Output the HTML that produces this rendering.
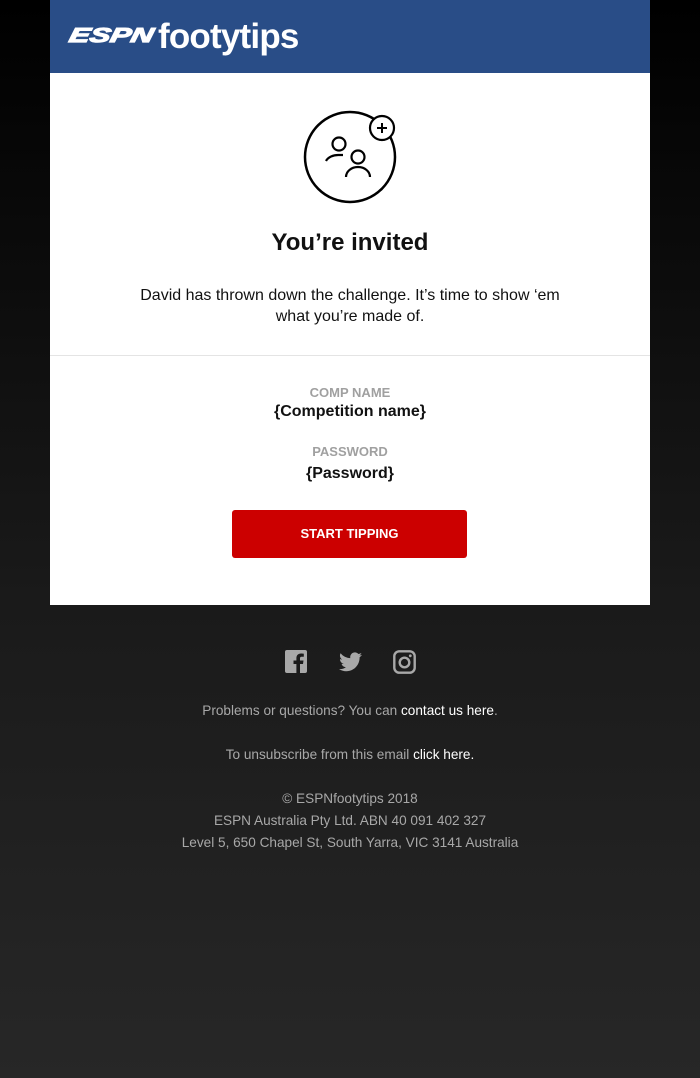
<!DOCTYPE html>
<html><head><meta charset="utf-8"><style>
*{margin:0;padding:0;box-sizing:border-box}
body{width:700px;height:1078px;background:linear-gradient(#000 0px,#1a1a1a 600px,#272727 1078px);font-family:"Liberation Sans",sans-serif;position:relative;overflow:hidden}
.hdr{position:absolute;left:50px;top:0;width:600px;height:73px;background:#294d87}
.espn{position:absolute;left:22px;top:24px;color:#fff;font-style:italic;font-weight:900;font-size:28px;-webkit-text-stroke:1.6px #fff;transform-origin:0 0;transform:skewX(-12deg) scale(1.1,0.72);white-space:nowrap}
.ft2{position:absolute;left:108px;top:17px;color:#fff;font-weight:bold;font-size:35px;letter-spacing:-0.8px;white-space:nowrap}
.card{position:absolute;left:50px;top:73px;width:600px;height:532px;background:#fff;text-align:center}
h1{position:absolute;top:156px;width:100%;font-size:24px;font-weight:bold;color:#111}
.p{position:absolute;top:212px;left:80px;width:440px;font-size:16px;line-height:21px;color:#111}
.hr{position:absolute;top:282px;left:0;width:600px;height:1px;background:#e4e4e4}
.lab{position:absolute;width:100%;font-size:13px;font-weight:bold;color:#a0a0a0}
.val{position:absolute;width:100%;font-size:16px;font-weight:bold;color:#111}
.btn{position:absolute;left:182px;top:437px;width:235px;height:48px;background:#cc0000;border-radius:3px;color:#fff;font-weight:bold;font-size:13px;line-height:48px}
.ft{position:absolute;width:100%;text-align:center;font-size:13.6px;color:#a8a8a8;line-height:22px}
.ft b{font-weight:normal;color:#fff}
</style></head><body>
<div class="hdr"><div class="espn">ESPN</div><div class="ft2">footytips</div></div>
<div class="card">
<svg style="position:absolute;left:240px;top:27px" width="120" height="110" viewBox="240 27 120 110">
<circle cx="300" cy="84" r="45" fill="none" stroke="#000" stroke-width="2.5"/>
<circle cx="332" cy="55" r="12" fill="#fff" stroke="#000" stroke-width="2.2"/>
<path d="M332 50v10M327 55h10" stroke="#000" stroke-width="2"/>
<circle cx="289" cy="71" r="6.5" fill="none" stroke="#000" stroke-width="2.2"/>
<path d="M276 88a13 9 0 0 1 13-6h4" fill="none" stroke="#000" stroke-width="2.2"/>
<circle cx="308" cy="84" r="6.5" fill="none" stroke="#000" stroke-width="2.2"/>
<path d="M296 104a12 10 0 0 1 24 0" fill="none" stroke="#000" stroke-width="2.2"/>
</svg>
<h1>You’re invited</h1>
<div class="p">David has thrown down the challenge. It’s time to show ‘em what you’re made of.</div>
<div class="hr"></div>
<div class="lab" style="top:312px">COMP NAME</div>
<div class="val" style="top:330px">{Competition name}</div>
<div class="lab" style="top:371px">PASSWORD</div>
<div class="val" style="top:392px">{Password}</div>
<div class="btn">START TIPPING</div>
</div>
<svg style="position:absolute;left:285px;top:650px" width="22" height="23" viewBox="0 0 22 23"><rect x="0" y="0" width="22" height="23" rx="2" fill="#a8a8a8"/><path d="M15 23v-9h3l.5-3.5H15V8.5c0-1 .3-1.7 1.8-1.7h2V3.7c-.4 0-1.5-.2-2.8-.2-2.8 0-4.6 1.7-4.6 4.8v2.2H8.5V14h2.9v9z" fill="#1b1b1b"/></svg>
<svg style="position:absolute;left:339px;top:652px" width="23" height="20" viewBox="0 0 24 20"><path d="M24 2.4c-.9.4-1.8.6-2.8.8 1-.6 1.8-1.6 2.2-2.7-1 .6-2 1-3.1 1.2C19.4.7 18.1 0 16.6 0c-2.7 0-4.9 2.2-4.9 4.9 0 .4 0 .8.1 1.1C7.7 5.8 4.1 3.9 1.7.9c-.4.7-.7 1.6-.7 2.5 0 1.7.9 3.2 2.2 4.1-.8 0-1.6-.2-2.2-.6v.1c0 2.4 1.7 4.4 3.9 4.8-.4.1-.8.2-1.3.2-.3 0-.6 0-.9-.1.6 2 2.4 3.4 4.6 3.4-1.7 1.3-3.8 2.1-6.1 2.1H0c2.2 1.4 4.8 2.2 7.5 2.2 9.1 0 14-7.5 14-14v-.6c1-.7 1.8-1.6 2.5-2.6z" fill="#a8a8a8"/></svg>
<svg style="position:absolute;left:393px;top:650px" width="23" height="24" viewBox="0 0 23 24"><rect x="1.3" y="1.3" width="20.4" height="21.4" rx="5" fill="none" stroke="#a8a8a8" stroke-width="2.4"/><circle cx="11.5" cy="12.5" r="4.8" fill="none" stroke="#a8a8a8" stroke-width="2.4"/><circle cx="17.3" cy="5.8" r="1.4" fill="#a8a8a8"/></svg>
<div class="ft" style="top:700px">Problems or questions? You can <b>contact us here</b>.</div>
<div class="ft" style="top:744px">To unsubscribe from this email <b>click here.</b></div>
<div class="ft" style="top:788px">© ESPNfootytips 2018<br>ESPN Australia Pty Ltd. ABN 40 091 402 327<br>Level 5, 650 Chapel St, South Yarra, VIC 3141 Australia</div>
</body></html>
